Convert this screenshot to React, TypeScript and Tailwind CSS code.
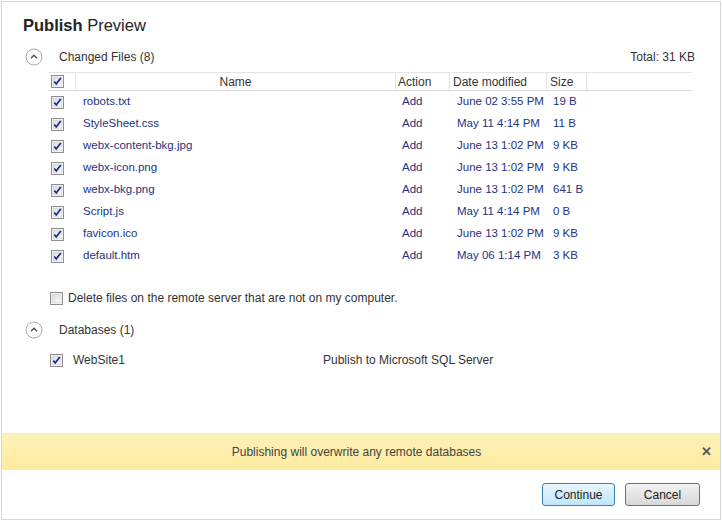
import React from 'react'

const files = [
  { name: 'robots.txt', date: 'June 02 3:55 PM', size: '19 B' },
  { name: 'StyleSheet.css', date: 'May 11 4:14 PM', size: '11 B' },
  { name: 'webx-content-bkg.jpg', date: 'June 13 1:02 PM', size: '9 KB' },
  { name: 'webx-icon.png', date: 'June 13 1:02 PM', size: '9 KB' },
  { name: 'webx-bkg.png', date: 'June 13 1:02 PM', size: '641 B' },
  { name: 'Script.js', date: 'May 11 4:14 PM', size: '0 B' },
  { name: 'favicon.ico', date: 'June 13 1:02 PM', size: '9 KB' },
  { name: 'default.htm', date: 'May 06 1:14 PM', size: '3 KB' },
]

function CheckBox({ checked = true }: { checked?: boolean }) {
  return (
    <svg width="13" height="13" viewBox="0 0 13 13" className="shrink-0">
      <defs>
        <linearGradient id="cbfill" x1="0" y1="0" x2="1" y2="1">
          <stop offset="0" stopColor="#d9dde3" />
          <stop offset="1" stopColor="#f7f8fa" />
        </linearGradient>
      </defs>
      <rect x="0.5" y="0.5" width="12" height="12" fill="#fff" stroke="#8f8f8f" />
      <rect x="2" y="2" width="9" height="9" fill="url(#cbfill)" stroke="#c4c8ce" strokeWidth="0.6" />
      {checked && (
        <path d="M3.3 6.6 L5.3 8.8 L9.8 3" fill="none" stroke="#23318f" strokeWidth="1.8" />
      )}
    </svg>
  )
}

function Collapse() {
  return (
    <svg width="18" height="18" viewBox="0 0 18 18" className="shrink-0">
      <circle cx="9" cy="9" r="8" fill="#fff" stroke="#a8a8a8" />
      <path d="M6 10.3 L9 7.3 L12 10.3" fill="none" stroke="#555" strokeWidth="1.5" />
    </svg>
  )
}

export default function App() {
  return (
    <div
      className="w-[722px] h-[521px] bg-white p-px text-[12px] text-[#333] whitespace-nowrap"
      style={{ fontFamily: '"Segoe UI", "Liberation Sans", Arial, sans-serif' }}
    >
      <div className="flex h-full flex-col border border-[#d8d8d8]">
        <h1 className="ml-[21px] mt-[12px] text-[16.5px] leading-[22px] text-[#222]">
          <span className="font-bold">Publish</span> Preview
        </h1>

        <div className="mt-[12px] flex items-center pl-[23px] pr-[25px]">
          <Collapse />
          <span className="ml-[16px]">Changed Files (8)</span>
          <span className="ml-auto">Total: 31 KB</span>
        </div>

        <div className="ml-[46px] mr-[28px] mt-[6px]">
          <div className="flex h-[19px] items-center border-b border-t border-[#e4e4e4] border-b-[#d8d8d8]">
            <div className="flex h-full w-[28px] items-center border-r border-[#e4e4e4] pl-[3px]">
              <CheckBox />
            </div>
            <div className="flex h-full w-[320px] items-center justify-center border-r border-[#e4e4e4]">Name</div>
            <div className="flex h-full w-[54px] items-center border-r border-[#e4e4e4] pl-[2px]">Action</div>
            <div className="flex h-full w-[97px] items-center border-r border-[#e4e4e4] pl-[3px]">Date modified</div>
            <div className="flex h-full w-[40px] items-center border-r border-[#e4e4e4] pl-[3px]">Size</div>
          </div>
          <div className="text-[11.5px] text-[#1d3382]">
            {files.map((f) => (
              <div key={f.name} className="flex h-[22px] items-center">
                <div className="flex w-[28px] items-center pl-[3px]">
                  <CheckBox />
                </div>
                <div className="w-[320px] pl-[7px]">{f.name}</div>
                <div className="w-[54px] pl-[6px]">Add</div>
                <div className="w-[97px] pl-[7px]">{f.date}</div>
                <div className="pl-[6px]">{f.size}</div>
              </div>
            ))}
          </div>
        </div>

        <div className="ml-[48px] mt-[22px] flex items-center">
          <CheckBox checked={false} />
          <span className="ml-[5px]">Delete files on the remote server that are not on my computer.</span>
        </div>

        <div className="mt-[14px] flex items-center pl-[23px]">
          <Collapse />
          <span className="ml-[16px]">Databases (1)</span>
        </div>

        <div className="ml-[48px] mt-[12px] flex items-center">
          <CheckBox />
          <span className="ml-[10px] w-[250px]">WebSite1</span>
          <span>Publish to Microsoft SQL Server</span>
        </div>

        <div className="mt-[64px] flex h-[37px] items-center bg-gradient-to-b from-[#fdf1b8] to-[#fdeca0]">
          <span className="flex-1 pl-[10px] text-center text-[#444]">Publishing will overwrite any remote databases</span>
          <span className="mr-[8px] text-[13px] font-bold text-[#555]">✕</span>
        </div>

        <div className="mt-[13px] flex justify-end gap-[10px] pr-[20px]">
          <button className="h-[23px] w-[73px] rounded-[3px] border border-[#3c7fb1] bg-gradient-to-b from-[#eaf6fd] to-[#bee6fd] text-[12px] text-[#222]">
            Continue
          </button>
          <button className="h-[23px] w-[75px] rounded-[3px] border border-[#707070] bg-gradient-to-b from-[#f2f2f2] to-[#d8d8d8] text-[12px] text-[#222]">
            Cancel
          </button>
        </div>
      </div>
    </div>
  )
}
